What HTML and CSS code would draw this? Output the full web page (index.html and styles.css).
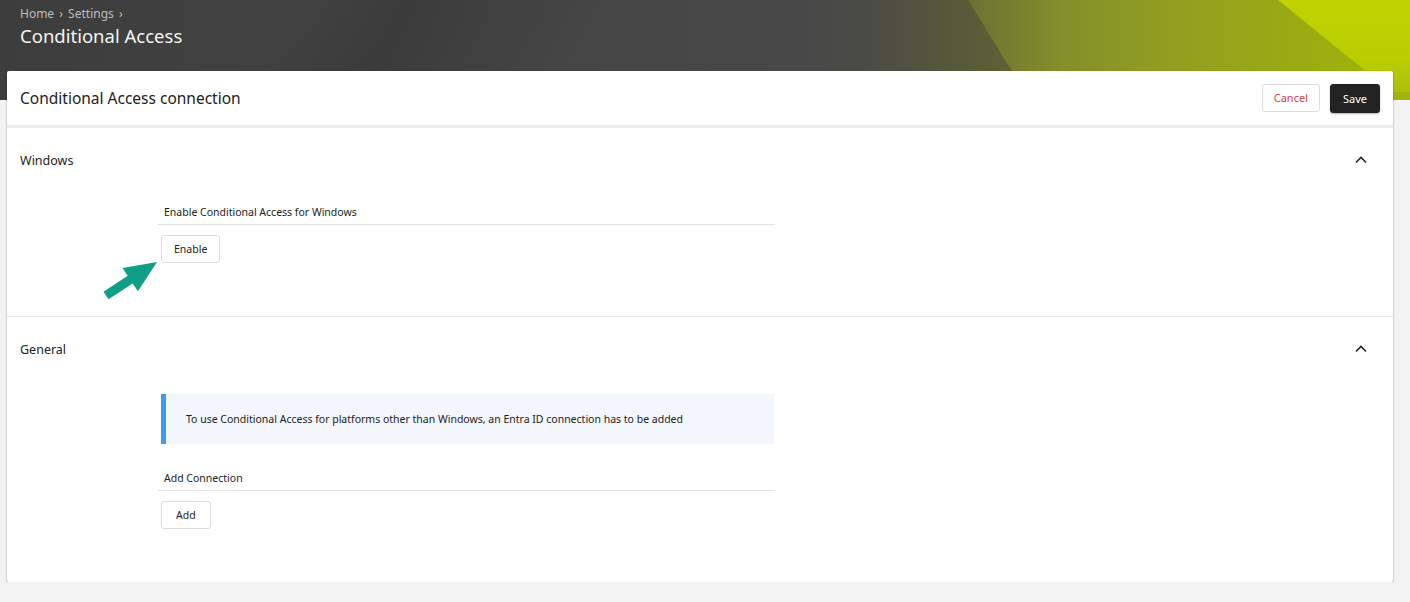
FILE: index.html
```html
<!DOCTYPE html>
<html lang="en">
<head>
    <meta charset="UTF-8">
    <meta name="viewport" content="width=device-width, initial-scale=1.0">
    <title>Conditional Access</title>
    <link rel="stylesheet" href="styles.css">
</head>
<body>

    <div class="banner">
        <div class="crumbs">Home <span class="sep">&rsaquo;</span> Settings <span class="sep">&rsaquo;</span></div>
        <h1>Conditional Access</h1>
    </div>

    <div class="card">
        <div class="card_head">
            <h2>Conditional Access connection</h2>
            <div class="actions">
                <button class="btn btn_cancel">Cancel</button>
                <button class="btn btn_save">Save</button>
            </div>
        </div>

        <div class="section">
            <div class="section_head">
                <span>Windows</span>
                <svg class="chevron" width="12" height="8" viewBox="0 0 12 8"><path d="M1 6.5 L6 1.5 L11 6.5" fill="none" stroke="#222" stroke-width="1.6"/></svg>
            </div>
            <div class="section_body">
                <div class="field_label">Enable Conditional Access for Windows</div>
                <button class="btn btn_small">Enable</button>
            </div>
            <svg class="arrow" width="64" height="48" viewBox="0 0 64 48">
                <polygon points="5.5,36.7 29.7,20.8 24.5,12.9 59,7 39.9,36.3 34.7,28.4 10.5,44.3" fill="#0f9f86"/>
            </svg>
        </div>

        <div class="section last">
            <div class="section_head">
                <span>General</span>
                <svg class="chevron" width="12" height="8" viewBox="0 0 12 8"><path d="M1 6.5 L6 1.5 L11 6.5" fill="none" stroke="#222" stroke-width="1.6"/></svg>
            </div>
            <div class="section_body">
                <div class="info">To use Conditional Access for platforms other than Windows, an Entra ID connection has to be added</div>
                <div class="field_label">Add Connection</div>
                <button class="btn btn_small btn_add">Add</button>
            </div>
        </div>
    </div>

</body>
</html>
```

FILE: styles.css
```css
body {
    margin: 0;
    padding: 0;
    background-color: #f3f3f3;
    font-family: "Noto Sans", "Open Sans", sans-serif;
    color: #222;
}

.banner {
    position: relative;
    overflow: hidden;
    height: 100px;
    box-sizing: border-box;
    padding: 6px 20px;
    background-image:
        linear-gradient(120deg, rgba(0, 0, 0, 0) 0%, rgba(0, 0, 0, 0) 20%, rgba(0, 0, 0, 0.12) 28%, rgba(0, 0, 0, 0) 42%),
        linear-gradient(to right, #3d3d3d 0%, #454545 35%, #484848 57%, #4c4c45 62%, #55573c 67%, #5e6233 72%);
    color: #fff;
}

/* olive and lime facets on the right of the banner */
.banner::before {
    content: "";
    position: absolute;
    top: 0;
    right: 0;
    bottom: 0;
    width: 442px;
    clip-path: polygon(0 0, 100% 0, 100% 100%, 14% 100%);
    background: linear-gradient(to right, #6b7232 0%, #84902a 22%, #93a01e 50%, #9aab12 75%, #a2b50c 100%);
}

.banner::after {
    content: "";
    position: absolute;
    top: 0;
    right: 0;
    bottom: 0;
    width: 132px;
    clip-path: polygon(0 0, 100% 0, 100% 92%, 86% 92%);
    background: linear-gradient(to bottom, #c0d300 0%, #bacd02 60%, #abbd08 100%);
}

.crumbs, .banner h1 {
    position: relative;
    z-index: 1;
}

.crumbs {
    font-size: 12px;
    color: #bdbdbd;
    line-height: 16px;
}

.crumbs .sep {
    margin: 0 2px;
}

.banner h1 {
    margin: 1px 0 0 0;
    font-size: 18.5px;
    font-weight: normal;
    color: #f4f4f4;
    line-height: 26px;
}

.card {
    margin: -29px 17px 0 7px;
    background: #fff;
    box-shadow: 0 1px 2px rgba(0, 0, 0, 0.45);
    border-radius: 2px;
    position: relative;
    z-index: 2;
}

.card_head {
    height: 54px;
    display: flex;
    align-items: center;
    justify-content: space-between;
    padding: 0 13px;
    border-bottom: 3px solid #ededed;
}

.card_head h2 {
    margin: 0;
    font-size: 15.5px;
    font-weight: normal;
    color: #222;
}

.actions {
    display: flex;
    gap: 10px;
}

.btn {
    font-family: inherit;
    font-size: 11px;
    height: 28px;
    border-radius: 3px;
    cursor: pointer;
    background: #fff;
    border: 1px solid #dcdcdc;
    color: #222;
}

.btn_cancel {
    color: #d9414b;
    padding: 0 11px;
}

.btn_save {
    background: #222;
    border-color: #222;
    color: #fff;
    padding: 0 12px;
    height: 29px;
    box-shadow: 0 1px 2px rgba(0, 0, 0, 0.3);
}

.section {
    position: relative;
    border-bottom: 1px solid #e8e8e8;
    padding-bottom: 53px;
}

.section.last {
    border-bottom: none;
}

.section_head {
    height: 64px;
    display: flex;
    align-items: center;
    justify-content: space-between;
    padding: 0 26px 0 13px;
    font-size: 12.5px;
}

.chevron {
    display: block;
}

.section_body {
    margin-left: 151px;
    width: 617px;
    padding-top: 12px;
}

.field_label {
    font-size: 10.5px;
    line-height: 16px;
    padding: 0 0 4px 6px;
    border-bottom: 1px solid #e3e3e3;
}

.btn_small {
    margin: 10px 0 0 3px;
    padding: 0 12px;
    font-size: 10.5px;
}

.btn_add {
    padding: 0 14px;
}

.info {
    margin: 1px 1px 26px 3px;
    height: 50px;
    box-sizing: border-box;
    background: #f3f6fc;
    border-left: 5px solid #3d9bf2;
    padding-left: 20px;
    display: flex;
    align-items: center;
    font-size: 10.5px;
}

.arrow {
    position: absolute;
    left: 91px;
    top: 127px;
}
```
